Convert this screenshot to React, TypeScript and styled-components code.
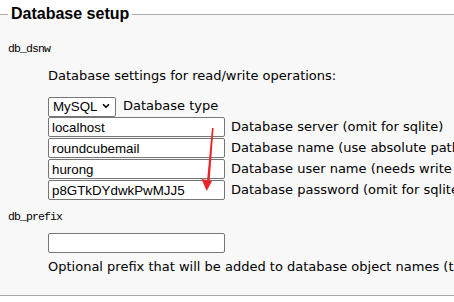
import React from "react";
import styled, { createGlobalStyle } from "styled-components";
import { ChevronDown } from "lucide-react";

const GlobalStyle = createGlobalStyle`
  html, body {
    margin: 0;
    background: #ffffff;
    overflow: hidden;
  }
  body {
    font-family: "DejaVu Sans", Verdana, sans-serif;
    color: #000;
  }
`;

const Page = styled.div`
  position: relative;
  width: 454px;
  height: 302px;
  padding-top: 4px;
  box-sizing: border-box;
  white-space: nowrap;
`;

const Fieldset = styled.fieldset`
  margin: 0;
  padding: 0 8px 20px 8px;
  border: none;
  border-top: 1px solid #aaaaaa;
  border-bottom: 1px solid #aaaaaa;
  background: #f8f8f8;
  min-width: 0;
`;

const Legend = styled.legend`
  margin-left: 0;
  padding: 0 3px;
  font-family: "Liberation Sans", Arial, sans-serif;
  font-size: 16px;
  font-weight: bold;
  line-height: 20px;
  color: #000;
`;

const Name = styled.div<{ $top: number }>`
  margin-top: ${({ $top }) => $top}px;
  font-family: "Liberation Mono", "DejaVu Sans Mono", monospace;
  font-size: 11.5px;
  letter-spacing: -0.9px;
  line-height: 14px;
`;

const Body = styled.div`
  padding-left: 40px;
`;

const Hint = styled.div<{ $top: number }>`
  margin-top: ${({ $top }) => $top}px;
  font-size: 13px;
  line-height: 16px;
`;

const Rows = styled.div`
  margin-top: 12px;
  display: flex;
  flex-direction: column;
  gap: 1px;
`;

const Row = styled.div<{ $gap?: number }>`
  display: flex;
  align-items: center;
  gap: ${({ $gap }) => $gap ?? 6}px;
`;

const Label = styled.span`
  font-size: 13px;
  line-height: 16px;
`;

const Input = styled.input`
  box-sizing: border-box;
  width: 177px;
  height: 20px;
  margin: 0;
  padding: 1px 3px;
  border: 1px solid #767676;
  border-radius: 2px;
  background: #fff;
  font-family: "Liberation Sans", Arial, sans-serif;
  font-size: 13.33px;
  color: #000;
  outline: none;
`;

const PrefixInput = styled(Input)`
  margin-top: 9px;
  display: block;
`;

const SelectWrap = styled.div`
  position: relative;
  width: 68px;
  height: 20px;
`;

const Select = styled.select`
  box-sizing: border-box;
  appearance: none;
  width: 68px;
  height: 20px;
  margin: 0;
  padding: 0 0 0 4px;
  border: 1px solid #767676;
  border-radius: 2px;
  background: #fff;
  font-family: "Liberation Sans", Arial, sans-serif;
  font-size: 13.33px;
  color: #000;
`;

const Chevron = styled(ChevronDown)`
  position: absolute;
  right: 5px;
  top: 5px;
  pointer-events: none;
`;

const Arrow = styled.svg`
  position: absolute;
  left: 195px;
  top: 125px;
`;

export default function App() {
  return (
    <Page>
      <GlobalStyle />
      <Fieldset>
        <Legend>Database setup</Legend>
        <Name $top={18}>db_dsnw</Name>
        <Body>
          <Hint $top={12}>Database settings for read/write operations:</Hint>
          <Rows>
            <Row $gap={7}>
              <SelectWrap>
                <Select defaultValue="mysql">
                  <option value="mysql">MySQL</option>
                </Select>
                <Chevron size={10} strokeWidth={4} color="#000" />
              </SelectWrap>
              <Label>Database type</Label>
            </Row>
            <Row>
              <Input defaultValue="localhost" />
              <Label>Database server (omit for sqlite)</Label>
            </Row>
            <Row>
              <Input defaultValue="roundcubemail" />
              <Label>Database name (use absolute path and filename for sqlite)</Label>
            </Row>
            <Row>
              <Input defaultValue="hurong" />
              <Label>Database user name (needs write permissions)</Label>
            </Row>
            <Row>
              <Input defaultValue="p8GTkDYdwkPwMJJ5" />
              <Label>Database password (omit for sqlite)</Label>
            </Row>
          </Rows>
        </Body>
        <Name $top={10}>db_prefix</Name>
        <Body>
          <PrefixInput defaultValue="" />
          <Hint $top={6}>Optional prefix that will be added to database object names (tables and sequences)</Hint>
        </Body>
      </Fieldset>
      <Arrow width="24" height="70" viewBox="0 0 24 70">
        <polygon points="17,3 18.6,3 14.6,56 12,56" fill="#e8262a" />
        <polygon points="6.5,54 17,56 11.7,66" fill="#e8262a" />
      </Arrow>
    </Page>
  );
}
